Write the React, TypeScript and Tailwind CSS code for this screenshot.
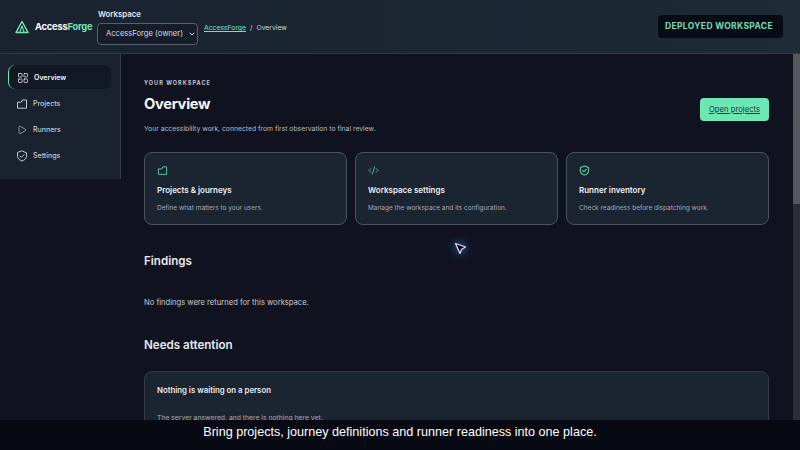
import { ChevronDown, CodeXml, LayoutGrid, Play } from 'lucide-react';

function FolderIcon({ size = 12, className = '' }: { size?: number; className?: string }) {
  return (
    <svg width={size} height={size} viewBox="0 0 12 12" fill="none" stroke="currentColor" strokeWidth="1" strokeLinejoin="round" className={className}>
      <path d="M1.5 4.2H5.2L6.4 2H10.5V10.2H1.5Z" />
    </svg>
  );
}

function ShieldIcon({ size = 12, strokeWidth = 1 }: { size?: number; strokeWidth?: number }) {
  return (
    <svg width={size} height={size} viewBox="0 0 12 12" fill="none" stroke="currentColor" strokeWidth={strokeWidth} strokeLinejoin="round" strokeLinecap="round">
      <path d="M6 1 10.5 2.8V6.2C10.5 8.4 8.5 10.2 6 11 3.5 10.2 1.5 8.4 1.5 6.2V2.8Z" />
      <path d="M4 6 5.4 7.3 8 4.7" />
    </svg>
  );
}

const nav = [
  { label: 'Overview', icon: <LayoutGrid size={12} strokeWidth={1.4} />, active: true },
  { label: 'Projects', icon: <FolderIcon />, active: false },
  { label: 'Runners', icon: <Play size={10} strokeWidth={1.6} className="mx-px" />, active: false },
  { label: 'Settings', icon: <ShieldIcon />, active: false },
];

const cards = [
  { title: 'Projects & journeys', text: 'Define what matters to your users.', icon: <FolderIcon size={11} /> },
  { title: 'Workspace settings', text: 'Manage the workspace and its configuration.', icon: <CodeXml size={11} strokeWidth={1.8} /> },
  { title: 'Runner inventory', text: 'Check readiness before dispatching work.', icon: <ShieldIcon size={11} strokeWidth={1.2} /> },
];

function Logo() {
  return (
    <svg width="14" height="14" viewBox="0 0 14 14" fill="none" stroke="#6ee7b7" strokeWidth="1.5">
      <path d="M7 1.5 13 12.5H1Z" strokeLinejoin="round" />
      <path d="M7 6 4.8 12.5M7 6l2.2 6.5" strokeWidth="1.1" />
    </svg>
  );
}

export default function App() {
  return (
    <div className="relative flex h-[450px] w-[800px] flex-col overflow-hidden bg-[#10131f] font-['Inter',sans-serif] text-[#e5e7eb]">
      <header className="flex h-[54px] shrink-0 items-center border-b border-[#343b47] bg-gradient-to-r from-[#1a2230] to-[#1c2b36] pl-[15px] pr-[17px]">
        <Logo />
        <span className="ml-[6px] w-[62px] text-[9.3px] font-bold tracking-[-0.2px] text-white">
          Access<span className="text-[#6ee7b7]">Forge</span>
        </span>
        <div className="flex flex-col gap-[3px] self-start pt-[9px]">
          <span className="pl-px text-[7.8px] font-semibold leading-[11px] text-[#e5e7eb]">Workspace</span>
          <div className="flex h-[22px] w-[101px] items-center justify-between whitespace-nowrap rounded-[4px] border border-[#566070] bg-[#161d29] pl-[8px] pr-[1px] text-[7.6px] text-[#d7dbe1]">
            AccessForge (owner)
            <ChevronDown size={8} strokeWidth={3} />
          </div>
        </div>
        <div className="ml-[6px] flex gap-[4px] self-start pt-[23px] text-[6.8px] leading-[10px] text-[#d1d5db]">
          <span className="text-[#6ee7b7] underline">AccessForge</span>
          <span>/</span>
          <span>Overview</span>
        </div>
        <div className="ml-auto flex h-[23px] w-[125px] items-center rounded-[4px] bg-[#060c14] pl-[7px] text-[8.5px] font-bold tracking-[0.35px] text-[#74dcbd]">
          DEPLOYED WORKSPACE
        </div>
      </header>

      <div className="flex min-h-0 flex-1">
        <aside className="flex h-[125px] w-[121px] shrink-0 flex-col gap-[2px] border-r border-[#343b47] bg-[#1a2230] pl-[8px] pr-[9px] pt-[11px]">
          {nav.map((item) => (
            <div
              key={item.label}
              className={`flex h-[24px] items-center gap-[5px] rounded-[7px] pl-[8px] pt-[2px] text-[7px] font-medium ${
                item.active
                  ? 'border-l border-[#6ee7b7] bg-[#131825] font-semibold text-[#f3f4f6]'
                  : 'text-[#c4c9d1]'
              }`}
            >
              {item.icon}
              {item.label}
            </div>
          ))}
        </aside>

        <main className="min-w-0 flex-1 pl-[23px] pr-[24px] pt-[25px]">
          <p className="text-[5.5px] font-bold leading-[8px] tracking-[1.05px] text-[#c3c7ce]">YOUR WORKSPACE</p>
          <div className="flex items-start justify-between">
            <h1 className="mt-[7px] text-[14.7px] font-bold leading-[20px] tracking-[-0.3px] text-[#f5f6f7]">Overview</h1>
            <button className="mt-[11px] h-[23px] w-[69px] rounded-[4px] bg-[#6ee7b7] text-[7.7px] text-[#15392f] underline">
              Open projects
            </button>
          </div>
          <p className="mt-[3px] text-[6.8px] leading-[10px] text-[#b4b9c2]">
            Your accessibility work, connected from first observation to final review.
          </p>

          <div className="mt-[18px] grid grid-cols-3 gap-[8px]">
            {cards.map((card) => (
              <div key={card.title} className="h-[73px] rounded-[8px] border border-[#4b5361] bg-[#1b2431] px-[12px] pt-[12px]">
                <div className="text-[#5fcfa8]">{card.icon}</div>
                <h3 className="mt-[8px] text-[8px] font-semibold leading-[12px] text-[#f0f1f3]">{card.title}</h3>
                <p className="mt-[7px] text-[6.5px] leading-[10px] text-[#a3a9b3]">{card.text}</p>
              </div>
            ))}
          </div>

          <h2 className="mt-[27px] text-[11.6px] font-semibold leading-[18px] text-[#e9ebee]">Findings</h2>
          <p className="mt-[27px] text-[7.6px] leading-[12px] text-[#c7cbd2]">No findings were returned for this workspace.</p>
          <h2 className="mt-[27px] text-[11.6px] font-semibold leading-[18px] text-[#e9ebee]">Needs attention</h2>
          <div className="mt-[17px] h-[120px] rounded-[8px] border border-[#343b47] bg-[#1b2431] px-[12px] pt-[12px]">
            <h3 className="text-[7.8px] font-semibold leading-[12px] text-[#e9ebee]">Nothing is waiting on a person</h3>
            <p className="mt-[17px] text-[6.8px] leading-[10px] text-[#a3a9b3]">The server answered, and there is nothing here yet.</p>
          </div>
        </main>

        <div className="w-[7px] shrink-0 bg-[#2b2e33]">
          <div className="h-[150px] bg-[#55585d]" />
        </div>
      </div>

      {/* pointer from the recording */}
      <svg
        className="absolute left-[454px] top-[242px] drop-shadow-[0_0_4px_#3b82f6]"
        width="13"
        height="13"
        viewBox="0 0 13 13"
      >
        <path d="M1.5 1.5 11.5 5 7.5 7.5 6 11.5Z" fill="#05070d" stroke="#dbe4ee" strokeWidth="1.2" strokeLinejoin="round" />
      </svg>

      <div className="absolute inset-x-0 bottom-0 flex h-[30px] items-center justify-center bg-[#070a12] pb-[6px] font-['Liberation_Sans',sans-serif] text-[12.6px] text-white">
        Bring projects, journey definitions and runner readiness into one place.
      </div>
    </div>
  );
}
